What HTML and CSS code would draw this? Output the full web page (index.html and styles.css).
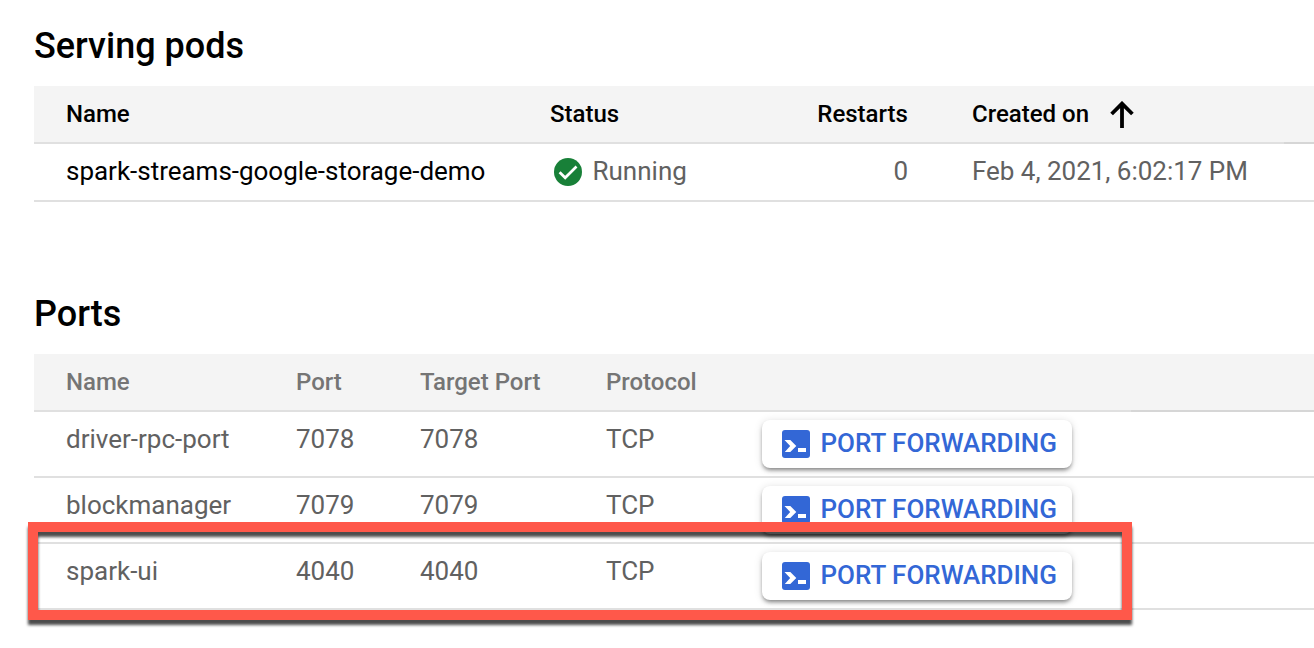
FILE: index.html
```html
<!DOCTYPE html>
<html lang="en">
<head>
<meta charset="utf-8">
<title>Pod details</title>
<link rel="stylesheet" href="styles.css">
</head>
<body>
<svg class="defs" aria-hidden="true">
  <symbol id="shell" viewBox="0 0 28 28">
    <rect width="28" height="28" rx="3" fill="#3367d6"/>
    <path d="M2.5 10h5.8l6 6-6 6H2.8l5.4-6z" fill="#fff"/>
    <path d="M16 18h8v4h-8z" fill="#fff"/>
  </symbol>
</svg>
<main class="page">
  <section class="pods">
    <h2 class="title">Serving pods</h2>
    <div class="row head">
      <span>Name</span><span>Status</span><span class="num">Restarts</span>
      <span class="sort"><span>Created on</span><svg class="arrow" viewBox="0 0 24 28"><path d="M12 27V3M1.6 13 12 2.6 22.4 13" fill="none" stroke="#000" stroke-width="3.8"/></svg></span>
    </div>
    <div class="row">
      <span class="link">spark-streams-google-storage-demo</span>
      <span class="status"><svg class="ok" viewBox="0 0 28 28"><circle cx="14" cy="14" r="14" fill="#188038"/><path d="M5.6 14.2 11.2 19.8 22.5 8.5" fill="none" stroke="#fff" stroke-width="2.7"/></svg><span class="state">Running</span></span>
      <span class="num">0</span><span class="date">Feb 4, 2021, 6:02:17 PM</span>
    </div>
  </section>
  <section class="ports">
    <h2 class="title">Ports</h2>
    <div class="row head"><span>Name</span><span>Port</span><span>Target Port</span><span>Protocol</span></div>
    <div class="row"><span>driver-rpc-port</span><span>7078</span><span>7078</span><span>TCP</span><button class="forward"><svg class="shell"><use href="#shell"/></svg>PORT FORWARDING</button></div>
    <div class="row"><span>blockmanager</span><span>7079</span><span>7079</span><span>TCP</span><button class="forward"><svg class="shell"><use href="#shell"/></svg>PORT FORWARDING</button></div>
    <div class="row"><span>spark-ui</span><span>4040</span><span>4040</span><span>TCP</span><button class="forward"><svg class="shell"><use href="#shell"/></svg>PORT FORWARDING</button></div>
  </section>
  <div class="highlight"></div>
</main>
</body>
</html>
```
FILE: styles.css
```css
* { box-sizing: border-box; }
body { margin: 0; background: #fff; font-family: Roboto, sans-serif; overflow: hidden; }
.defs { display: block; width: 0; height: 0; }
.page { position: relative; height: 648px; padding: 24px 0 0 34px; }
.title { margin: 0; height: 62px; font-size: 36px; font-weight: 500; line-height: 44px; color: #000; }
.row { display: grid; padding-left: 32px; border-bottom: 2px solid #e0e0e0; font-size: 26px; line-height: 54px; color: #616161; white-space: nowrap; }
.pods .row { grid-template-columns: 484px 268px 90px 1fr; height: 58px; }
.pods .row > :last-child { padding-left: 64px; }
.ports { margin-top: 90px; }
.ports .row { grid-template-columns: 230px 124px 186px 156px 310px; height: 66px; }
.row.head, .ports .row.head { height: 58px; background: #f4f4f4; font-size: 24px; font-weight: 500; line-height: 56px; color: #757575; }
.pods .row.head { color: #000; border-image: linear-gradient(to right, #e0e0e0 1248px, #d6d6d6 1248px) 2; }
.ports .row.head { border-image: linear-gradient(to right, #e0e0e0 1096px, #d6d6d6 1096px) 2; }
.num { text-align: right; }
.head .num { margin-left: -4px; padding-right: 0.2px; letter-spacing: -0.02px; }
.link { color: #000; letter-spacing: -0.015px; }
.date { letter-spacing: -0.02px; }
.sort, .status { display: flex; align-items: center; }
.status { padding-left: 4px; gap: 10.5px; }
.state { height: 56px; }
.arrow { width: 24px; height: 28px; margin: 2px 0 0 21px; }
.ok { width: 28px; height: 28px; }
.forward { display: flex; align-items: center; gap: 10.5px; width: 310px; height: 48px; margin: 8px 0 0; padding: 0 0 2px 20px; border: 0; border-radius: 8px; background: #fff; box-shadow: 0 3px 4px -1px rgba(0,0,0,.45), 0 1px 9px rgba(0,0,0,.13); color: #3367d6; font: 500 26px/46px Roboto, sans-serif; letter-spacing: -0.02px; white-space: nowrap; }
.shell { width: 28px; height: 28px; flex: none; margin-top: 2px; }
.highlight { position: absolute; left: 28px; top: 522px; width: 1104px; height: 98px; border: 10px solid #ff584a; filter: drop-shadow(0 5px 1.8px rgba(0,0,0,.7)); }
```
